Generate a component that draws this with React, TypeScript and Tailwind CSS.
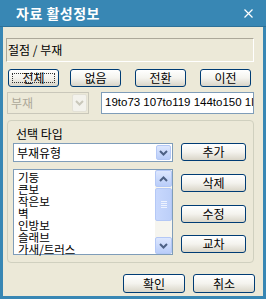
import React from 'react';
import clsx from 'clsx';

const items = ['기둥', '큰보', '작은보', '벽', '인방보', '슬래브', '가새/트러스'];

const Chevron = ({ dir = 'down', color = '#4d6185' }: { dir?: 'up' | 'down'; color?: string }) => (
  <svg width="9" height="6" viewBox="0 0 9 6">
    <path
      d={dir === 'down' ? 'M1 1 L4.5 4.5 L8 1' : 'M1 5 L4.5 1.5 L8 5'}
      fill="none"
      stroke={color}
      strokeWidth="2"
    />
  </svg>
);

const Btn = ({ label, className, focus }: { label: string; className?: string; focus?: boolean }) => (
  <button
    className={clsx(
      'relative flex items-center justify-center rounded-[3px] border border-[#003c74] bg-linear-to-b from-white via-[#f4f3ee] to-[#d9d5c8] text-[12px] leading-none text-black',
      className
    )}
  >
    {focus && <span className="absolute inset-[3px] border border-dotted border-[#333]" />}
    <span className="relative">{label}</span>
  </button>
);

const BlueArrow = ({ dir, className }: { dir: 'up' | 'down'; className?: string }) => (
  <div
    className={clsx(
      'flex items-center justify-center rounded-[2px] border border-[#b4c8f6] bg-linear-to-b from-[#dde7fe] to-[#b9cdf9]',
      className
    )}
  >
    <Chevron dir={dir} />
  </div>
);

export default function App() {
  return (
    <div className="flex h-[299px] w-[266px] flex-col bg-[#3887b4] font-['Noto_Sans_CJK_KR',sans-serif] text-black">
      {/* title bar */}
      <div className="flex h-[27px] items-center border-b border-[#2e7299] pl-[16px] pr-[13px]">
        <span className="text-[14px] font-bold leading-none tracking-[0.5px] text-white">자료 활성정보</span>
        <svg className="ml-auto" width="9" height="9" viewBox="0 0 9 9">
          <path d="M0.5 0.5 L8.5 8.5 M8.5 0.5 L0.5 8.5" stroke="#fff" strokeWidth="1.2" />
        </svg>
      </div>

      {/* body */}
      <div className="mx-[3px] mb-[3px] flex flex-1 flex-col bg-[#ece9d8]">
        <div className="ml-[3px] mt-[11px] flex h-[24px] w-[248px] items-center border border-b-white border-l-[#aca899] border-r-white border-t-[#aca899] pl-[1px] text-[12px] leading-none">
          절점 / 부재
        </div>

        <div className="mt-[7px] flex h-[18px] pl-[5px]">
          <Btn label="전체" focus className="w-[51px]" />
          <Btn label="없음" className="ml-[11px] w-[51px]" />
          <Btn label="전환" className="ml-[14px] w-[51px]" />
          <Btn label="이전" className="ml-[14px] w-[51px]" />
        </div>

        <div className="mt-[5px] flex h-[22px] pl-[4px]">
          <div className="flex w-[82px] items-center border border-[#c9c7ba] bg-[#ece9d8] p-[1px]">
            <span className="flex-1 pl-[2px] text-[12px] leading-none text-[#aca899]">부재</span>
            <div className="flex h-full w-[15px] items-center justify-center rounded-[2px] border border-[#e3e1d6] bg-[#f3f2ec]">
              <Chevron color="#c9c7ba" />
            </div>
          </div>
          <div className="ml-[12px] flex w-[153px] items-center overflow-hidden whitespace-nowrap border border-[#7f9db9] bg-white pl-[3px] font-['Liberation_Sans',sans-serif] text-[11.5px] leading-none">
            19to73 107to119 144to150 1l
          </div>
        </div>

        {/* group box */}
        <div className="ml-[4px] mt-[6px] flex h-[143px] w-[247px] flex-col rounded-[4px] border border-[#d0d0bf] px-[5px]">
          <div className="ml-[3px] mt-[6px] h-[13px] text-[12px] leading-[13px]">선택 타입</div>
          <div className="mt-[3px] flex h-[19px]">
            <div className="flex w-[160px] items-center border border-[#7f9db9] bg-white p-[1px]">
              <span className="flex-1 pl-[2px] text-[12px] leading-none">부재유형</span>
              <BlueArrow dir="down" className="h-full w-[15px]" />
            </div>
            <Btn label="추가" className="ml-[8px] h-[18px] w-[65px]" />
          </div>
          <div className="mt-[7px] flex">
            <div className="flex h-[86px] w-[160px] border border-[#7f9db9] bg-white">
              <div className="flex-1 pl-[4px] pt-[1px]">
                {items.map((it) => (
                  <div key={it} className="h-[12px] overflow-visible whitespace-nowrap text-[11.5px] leading-[12px]">
                    {it}
                  </div>
                ))}
              </div>
              <div className="flex w-[17px] flex-col bg-[#f6f5ef]">
                <BlueArrow dir="up" className="h-[17px]" />
                <div className="mt-[1px] flex h-[33px] flex-col items-center justify-center gap-[1px] rounded-[2px] border border-[#b4c8f6] bg-linear-to-r from-[#c8d8fd] to-[#bccff9]">
                  <span className="h-px w-[6px] bg-[#eef3fe]" />
                  <span className="h-px w-[6px] bg-[#eef3fe]" />
                  <span className="h-px w-[6px] bg-[#eef3fe]" />
                  <span className="h-px w-[6px] bg-[#eef3fe]" />
                </div>
                <div className="flex-1" />
                <BlueArrow dir="down" className="h-[17px]" />
              </div>
            </div>
            <div className="ml-[8px] flex flex-col">
              <Btn label="삭제" className="mt-[5px] h-[18px] w-[65px]" />
              <Btn label="수정" className="mt-[13px] h-[18px] w-[65px]" />
              <Btn label="교차" className="mt-[12px] h-[18px] w-[65px]" />
            </div>
          </div>
        </div>

        <div className="mt-[11px] flex h-[19px] pl-[120px]">
          <Btn label="확인" className="w-[62px]" />
          <Btn label="취소" className="ml-[8px] w-[62px]" />
        </div>
      </div>
    </div>
  );
}
